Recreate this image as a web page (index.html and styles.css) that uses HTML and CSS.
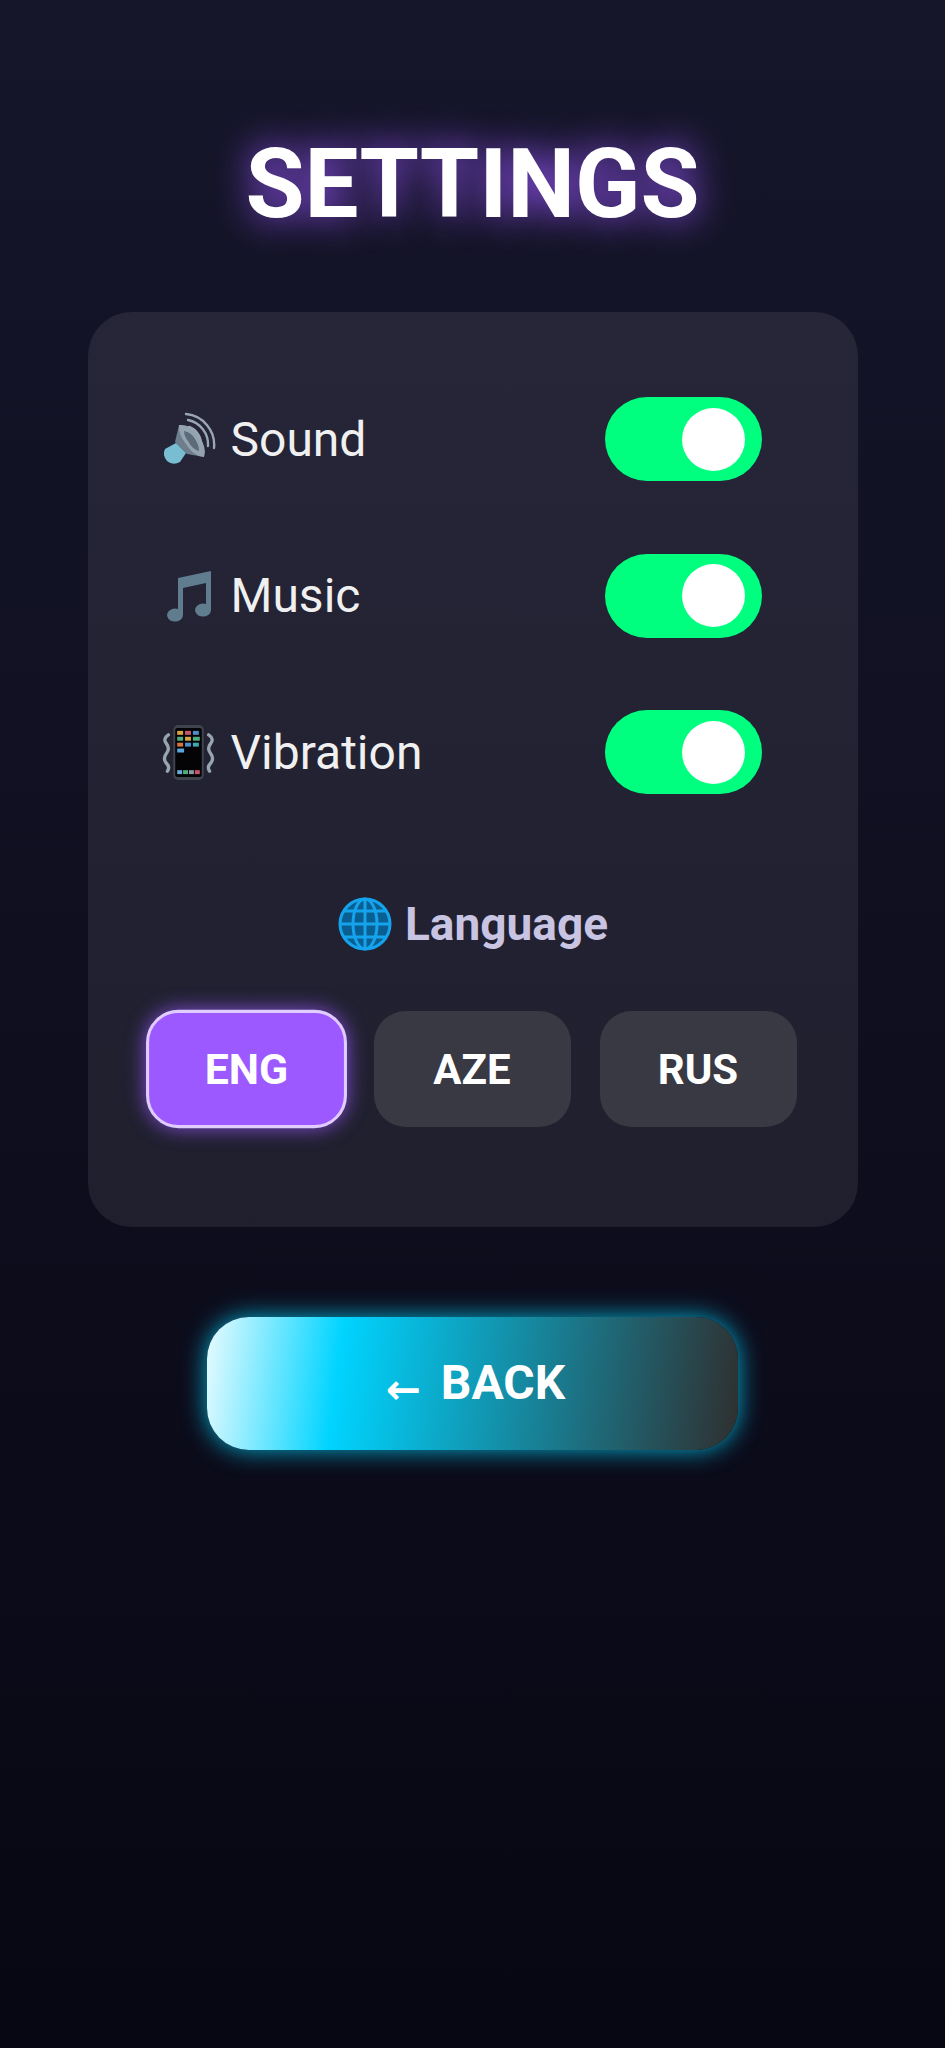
FILE: index.html
```html
<!DOCTYPE html>
<html lang="en">
<head>
    <meta charset="UTF-8">
    <meta name="viewport" content="width=device-width, initial-scale=1.0">
    <title>Settings</title>
    <link rel="stylesheet" href="styles.css">
</head>
<body>
    <h1 class="title">SETTINGS</h1>

    <div class="card">
        <div class="row">
            <span class="row-label">
                <svg class="icon" viewBox="0 0 55 55">
                    <path d="M14 30 L18 13 Q30 12 38 24 Q46 36 43 45 L26 42 Z" fill="#6f7e8c"/>
                    <path d="M18 13 Q30 12 38 24 Q46 36 43 45 Q32 44 25 32 Q17 22 18 13 Z" fill="#93a4b0"/>
                    <path d="M23 19 Q30 20 34 27 Q38 33 38 39 Q31 37 27 29 Q23 24 23 19 Z" fill="#5d6b78"/>
                    <path d="M15 31 L25 41 L19 50 Q12 54 6 49 Q1 43 4 37 Z" fill="#78bdd2"/>
                    <g fill="none" stroke="#9aa7b2" stroke-width="2.4" stroke-linecap="round">
                        <path d="M28 15 A18 18 0 0 1 40 32"/>
                        <path d="M27 8 A25 25 0 0 1 47 34"/>
                        <path d="M25 2 A31 31 0 0 1 53 36"/>
                    </g>
                </svg>
                Sound
            </span>
            <span class="toggle"><span class="knob"></span></span>
        </div>
        <div class="row">
            <span class="row-label">
                <svg class="icon" viewBox="0 0 55 55">
                    <path d="M17 10 L50 3 L50 42 A8 6.5 0 1 1 45 36 L45 15 L22 20 L22 47 A8 6.5 0 1 1 17 41 Z" fill="#5f7d8e"/>
                </svg>
                Music
            </span>
            <span class="toggle"><span class="knob"></span></span>
        </div>
        <div class="row">
            <span class="row-label">
                <svg class="icon" viewBox="0 0 55 56">
                    <g fill="none" stroke="#98a5af" stroke-width="3.4" stroke-linecap="round">
                        <path d="M7 10 Q1 14 5 19 Q9 24 5 29 Q1 34 5 39 Q9 43 6 47"/>
                        <path d="M48 10 Q54 14 50 19 Q46 24 50 29 Q54 34 50 39 Q46 43 49 47"/>
                    </g>
                    <rect x="12" y="0" width="31" height="56" rx="5" fill="#3f444c"/>
                    <rect x="14" y="3" width="27" height="50" rx="2" fill="#040406"/>
                    <g>
                        <rect x="16" y="6" width="6" height="4" fill="#d9a441"/>
                        <rect x="24" y="6" width="6" height="4" fill="#c9556b"/>
                        <rect x="32" y="6" width="6" height="4" fill="#4a8ecb"/>
                        <rect x="16" y="12" width="6" height="4" fill="#4fae7d"/>
                        <rect x="24" y="12" width="6" height="4" fill="#d9a441"/>
                        <rect x="32" y="12" width="7" height="4" fill="#4fae7d"/>
                        <rect x="16" y="18" width="6" height="4" fill="#d9743a"/>
                        <rect x="24" y="18" width="6" height="4" fill="#4a8ecb"/>
                        <rect x="32" y="18" width="6" height="4" fill="#3fa9b5"/>
                        <rect x="16" y="24" width="7" height="4" fill="#5aa7e0"/>
                        <rect x="16" y="46" width="5" height="4" fill="#6aa8d8"/>
                        <rect x="22" y="46" width="5" height="4" fill="#4fae7d"/>
                        <rect x="28" y="46" width="5" height="4" fill="#8a9aa8"/>
                        <rect x="34" y="46" width="5" height="4" fill="#c9556b"/>
                    </g>
                </svg>
                Vibration
            </span>
            <span class="toggle"><span class="knob"></span></span>
        </div>

        <div class="lang-title">
            <svg class="globe" viewBox="0 0 54 54">
                <circle cx="27" cy="27" r="26" fill="#0a5f92"/>
                <g fill="none" stroke="#14a3ec" stroke-width="3">
                    <circle cx="27" cy="27" r="25"/>
                    <ellipse cx="27" cy="27" rx="12" ry="25"/>
                    <path d="M27 2 V52 M2 27 H52 M6 14 H48 M6 40 H48"/>
                </g>
            </svg>
            Language
        </div>

        <div class="lang-buttons">
            <button class="lang-btn active">ENG</button>
            <button class="lang-btn">AZE</button>
            <button class="lang-btn">RUS</button>
        </div>
    </div>

    <button class="back-btn"><span class="arrow">←</span> BACK</button>
</body>
</html>
```

FILE: styles.css
```css
body {
    margin: 0;
    min-height: 100vh;
    display: flex;
    flex-direction: column;
    align-items: center;
    font-family: Roboto, "Liberation Sans", sans-serif;
    color: #fff;
    background: linear-gradient(180deg, #16162b 0%, #070713 100%);
    overflow: hidden;
}
.title {
    margin: 136px 0 80px;
    font-size: 96px;
    line-height: 1;
    font-weight: 700;
    text-shadow: 0 0 36px #9b59ff;
}
.card {
    box-sizing: border-box;
    width: 770px;
    height: 915px;
    padding: 85px 59px 0 60px;
    border-radius: 44px;
    background: rgba(255, 255, 255, 0.08);
}
.row {
    display: flex;
    justify-content: space-between;
    align-items: center;
    height: 84px;
    margin: 0 37px 72.7px 13px;
}
.row-label {
    display: flex;
    align-items: center;
    gap: 15px;
    font-size: 48px;
    color: #f0f0f0;
}
.icon {
    width: 55px;
    height: 55px;
}
.toggle {
    display: flex;
    justify-content: flex-end;
    align-items: center;
    box-sizing: border-box;
    width: 157px;
    height: 84px;
    padding: 0 17px;
    border-radius: 42px;
    background: #00ff7f;
}
.knob {
    width: 63px;
    height: 63px;
    border-radius: 50%;
    background: #fff;
}
.lang-title {
    display: flex;
    justify-content: center;
    align-items: center;
    gap: 13px;
    height: 52px;
    margin: 104px 0 61px;
    font-size: 46px;
    font-weight: 700;
    color: #c8c4e2;
}
.globe {
    width: 54px;
    height: 54px;
}
.lang-buttons {
    display: flex;
    gap: 29px;
}
.lang-btn {
    flex: 0 0 197px;
    height: 116px;
    padding: 0;
    border: none;
    border-radius: 32px;
    font-family: inherit;
    font-size: 42px;
    font-weight: 700;
    color: #fff;
    background: #393944;
}
.lang-btn.active {
    background: #9b59ff;
    border: 3px solid #e0ccff;
    box-shadow: 0 0 20px rgba(155, 89, 255, 0.8);
    transform: scale(1.02);
}
.back-btn {
    width: 531px;
    height: 133px;
    margin-top: 90px;
    padding: 0 0 0 6px;
    border: none;
    border-radius: 42px;
    font-family: inherit;
    font-size: 48px;
    font-weight: 700;
    color: #fff;
    background: linear-gradient(97deg, #e8fbff 0%, #00d4ff 25%, #2f2f2f 100%);
    box-shadow: 0 0 25px rgba(0, 212, 255, 0.8);
}
.arrow {
    margin-right: 8px;
    font-family: "DejaVu Sans", sans-serif;
    font-size: 42px;
    vertical-align: -5px;
}
```
